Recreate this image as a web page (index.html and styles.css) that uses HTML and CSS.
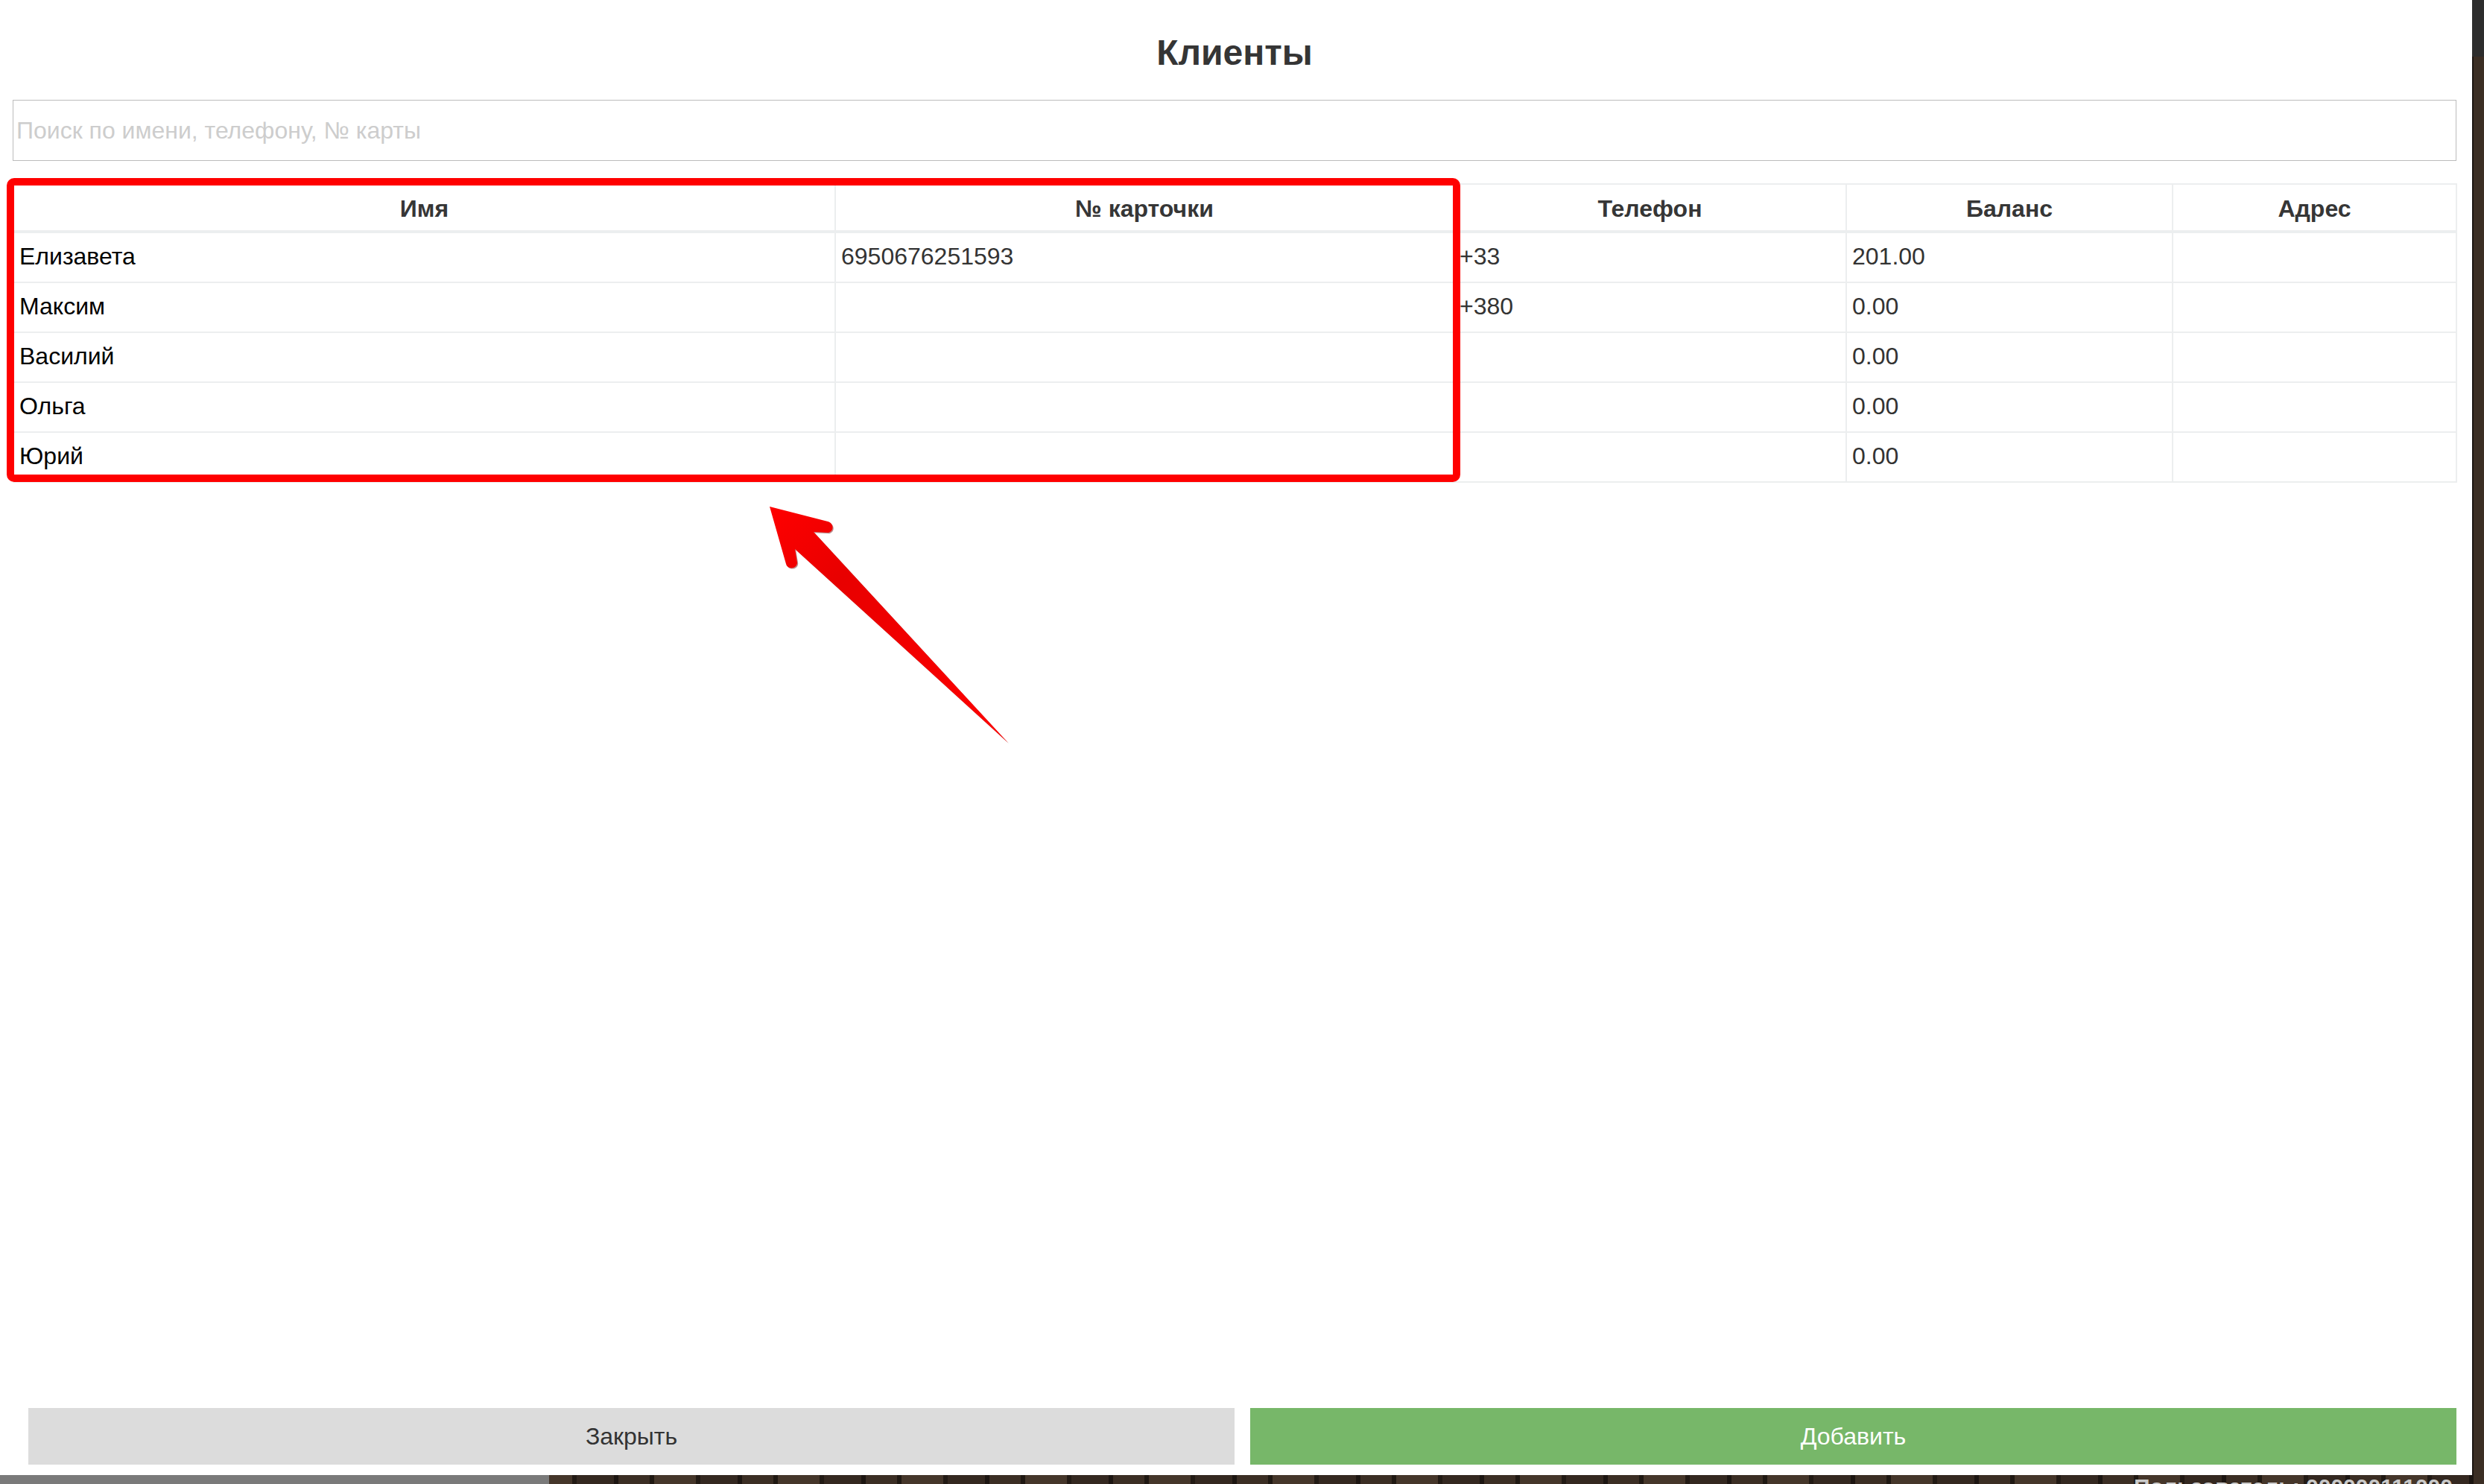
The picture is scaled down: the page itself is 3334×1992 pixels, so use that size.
FILE: index.html
```html
<!DOCTYPE html>
<html lang="ru">
<head>
<meta charset="utf-8">
<title>Клиенты</title>
<link rel="stylesheet" href="styles.css">
</head>
<body>
<div class="app-status">Пользователь: 000000111000</div>
<div class="modal">
  <h1 class="modal-title">Клиенты</h1>
  <input class="search" type="text" placeholder="Поиск по имени, телефону, № карты">
  <div class="table-wrap">
    <table class="clients">
      <colgroup>
        <col class="c-name"><col class="c-card"><col class="c-phone"><col class="c-balance"><col class="c-addr">
      </colgroup>
      <thead>
        <tr><th>Имя</th><th>№ карточки</th><th>Телефон</th><th>Баланс</th><th>Адрес</th></tr>
      </thead>
      <tbody>
        <tr><td>Елизавета</td><td>6950676251593</td><td>+33</td><td>201.00</td><td></td></tr>
        <tr><td>Максим</td><td></td><td>+380</td><td>0.00</td><td></td></tr>
        <tr><td>Василий</td><td></td><td></td><td>0.00</td><td></td></tr>
        <tr><td>Ольга</td><td></td><td></td><td>0.00</td><td></td></tr>
        <tr><td>Юрий</td><td></td><td></td><td>0.00</td><td></td></tr>
      </tbody>
    </table>
  </div>
  <div class="footer">
    <button class="btn btn-close" type="button">Закрыть</button>
    <button class="btn btn-add" type="button">Добавить</button>
  </div>
</div>
<svg class="annotation" width="3334" height="1992" viewBox="0 0 3334 1992" xmlns="http://www.w3.org/2000/svg">
  <defs>
    <linearGradient id="arrowFill" x1="0" y1="0" x2="1" y2="1">
      <stop offset="0" stop-color="#ff0000"/>
      <stop offset="0.3" stop-color="#e80000"/>
      <stop offset="1" stop-color="#ff0000"/>
    </linearGradient>
  </defs>
  <rect x="14" y="244" width="1941" height="398" rx="5" ry="5" fill="none" stroke="#ff0000" stroke-width="10"/>
  <path d="M1033,680 L1111,700 C1119,702 1120,713 1112,715 L1092,714 L1353,997 L1067,737 L1070,755 C1070,764 1057,765 1055,757 Z" fill="#6b0000" transform="translate(1.2,1.2)" opacity="0.45"/>
  <path d="M1033,680 L1111,700 C1119,702 1120,713 1112,715 L1092,714 L1353,997 L1067,737 L1070,755 C1070,764 1057,765 1055,757 Z" fill="url(#arrowFill)"/>
</svg>
</body>
</html>
```

FILE: styles.css
```css
html, body {
  margin: 0;
  width: 3334px;
  height: 1992px;
  overflow: hidden;
}

body {
  position: relative;
  font-family: "Liberation Sans", Arial, sans-serif;
  background:
    linear-gradient(#2d2d2d, #2d2d2d) no-repeat right top / 16px 76px,
    linear-gradient(#7a7a7a, #7a7a7a) no-repeat 0 1980px / 737px 12px,
    repeating-linear-gradient(90deg,
      #3b2e24 0 42px, #1f1812 42px 48px,
      #45362a 48px 104px, #221a14 104px 110px,
      #342820 110px 160px, #1c1511 160px 166px);
}

.app-status {
  position: absolute;
  left: 2864px;
  top: 1979px;
  z-index: 0;
  font-size: 30px;
  font-weight: bold;
  color: #c9c9c9;
  white-space: nowrap;
}

.modal {
  position: relative;
  z-index: 1;
  width: 3318px;
  height: 1980px;
  box-sizing: border-box;
  padding: 0 21px 14px 17px;
  background: #ffffff;
  display: flex;
  flex-direction: column;
}

.modal-title {
  margin: 0;
  padding-top: 43px;
  font-size: 48px;
  line-height: 56px;
  font-weight: bold;
  color: #353535;
  text-align: center;
}

.search {
  display: block;
  width: 100%;
  height: 82px;
  box-sizing: border-box;
  margin: 35px 0 0;
  padding: 0 4px;
  border: 1px solid #bcbcbc;
  border-radius: 0;
  outline: none;
  font-family: "Liberation Sans", Arial, sans-serif;
  font-size: 32px;
  color: #333;
  background: #fff;
}

.search::placeholder {
  color: #cdcdcd;
}

.table-wrap {
  flex: 1;
  padding-top: 30px;
}

.clients {
  border-collapse: collapse;
  table-layout: fixed;
  width: 3280px;
}

.c-name { width: 1103px; }
.c-card { width: 830px; }
.c-phone { width: 527px; }
.c-balance { width: 438px; }
.c-addr { width: 381px; }

.clients th,
.clients td {
  border: 2px solid #eceeef;
  padding: 9px 7px 11px;
  font-size: 32px;
  line-height: 45px;
  text-align: left;
  color: #333;
  white-space: nowrap;
  overflow: hidden;
}

.clients th {
  padding: 10px 8px 6px;
  border-bottom-width: 4px;
  text-align: center;
  font-weight: bold;
  color: #363636;
}

.clients td:first-child {
  color: #000;
}

.footer {
  display: flex;
  gap: 21px;
  padding-left: 21px;
}

.btn {
  flex: 1;
  height: 76px;
  border: 0;
  border-radius: 0;
  margin: 0;
  font-family: "Liberation Sans", Arial, sans-serif;
  font-size: 32px;
  cursor: pointer;
}

.btn-close {
  background: #dcdcdc;
  color: #333;
}

.btn-add {
  background: #77b769;
  color: #fff;
}

.annotation {
  position: absolute;
  left: 0;
  top: 0;
  z-index: 2;
  pointer-events: none;
}
```
